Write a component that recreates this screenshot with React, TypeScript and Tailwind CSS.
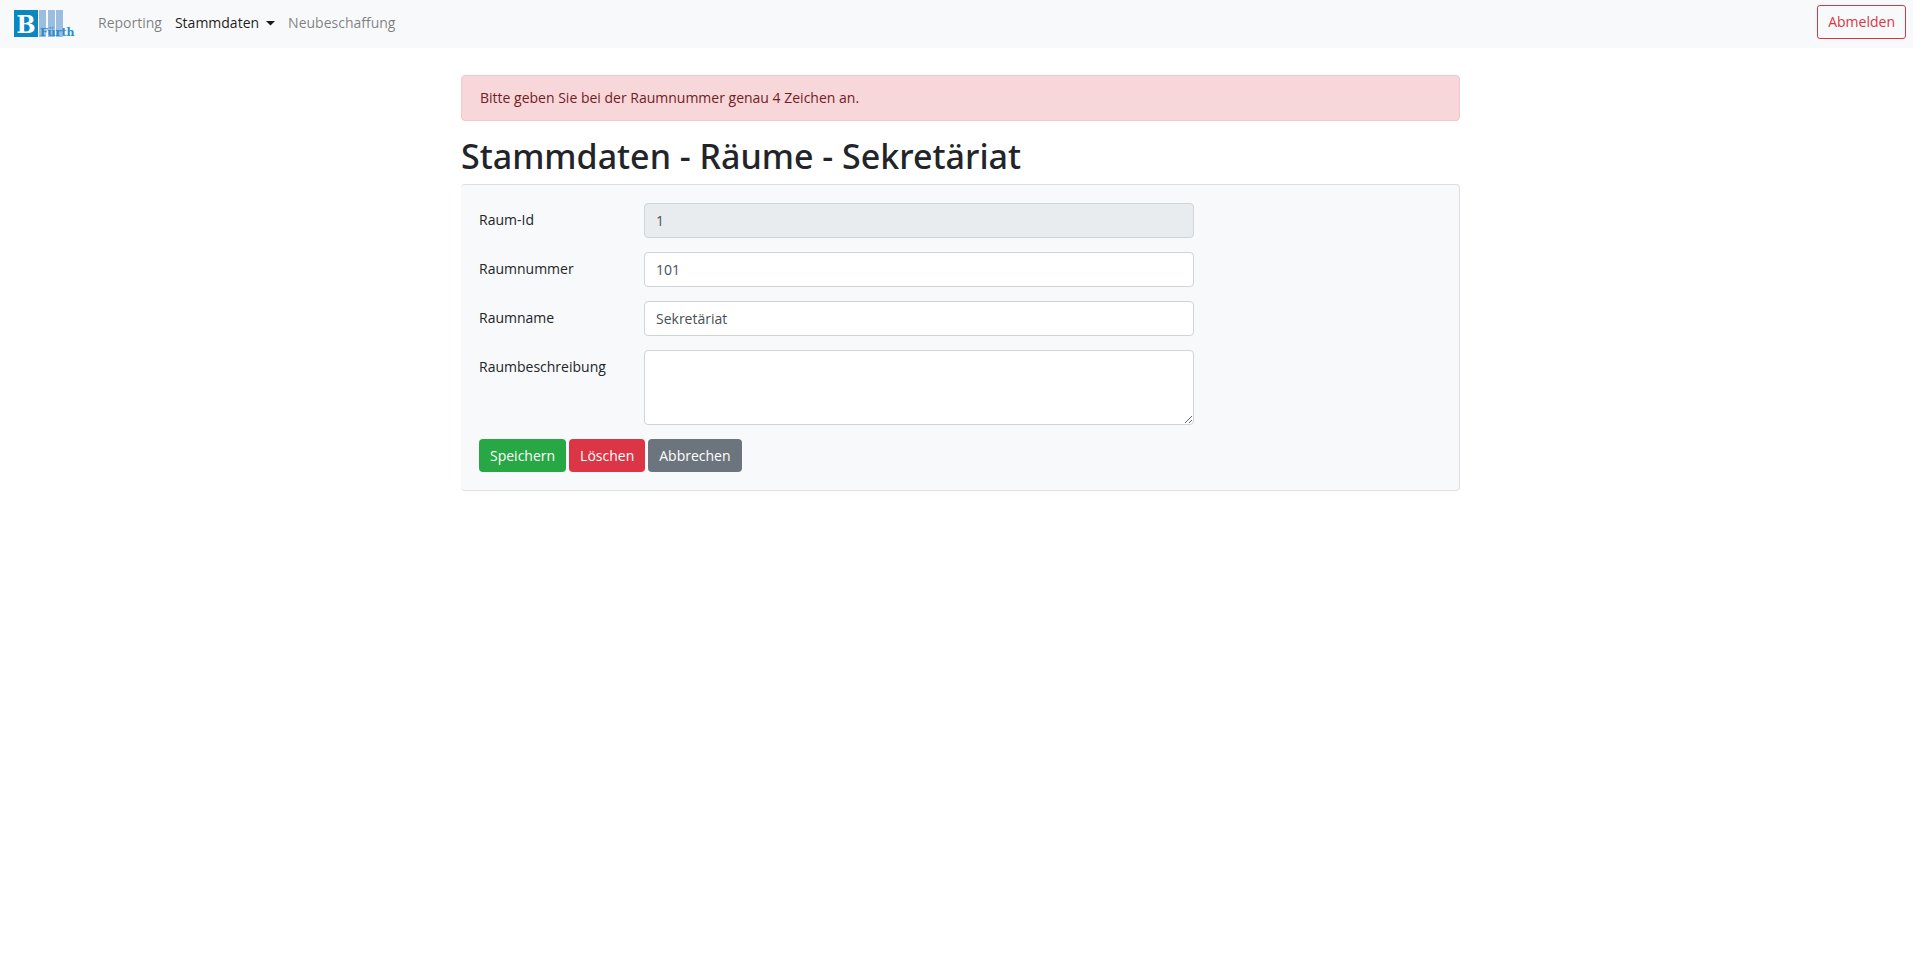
import type { ReactNode } from "react";

const control =
  "block w-full rounded border border-[#ced4da] px-[11px] text-sm text-[#495057] outline-none";

const button = "h-[33px] rounded px-[11px] text-sm text-white";

function Logo() {
  return (
    <svg width="66" height="30" viewBox="0 0 66 30" role="img" aria-label="B Fürth" className="overflow-visible">
      <rect x="0" y="3" width="24" height="27" fill="#0a86c0" />
      <rect x="25" y="3" width="7" height="27" fill="#9bbde0" />
      <rect x="34" y="3" width="7" height="27" fill="#9bbde0" />
      <rect x="42" y="3" width="7" height="27" fill="#9bbde0" />
      <text x="12" y="26" textAnchor="middle" fontFamily="'DejaVu Serif Condensed', 'DejaVu Serif', serif" fontWeight="700" fontSize="25" fill="#fff">
        B
      </text>
      <text x="26" y="29" fontFamily="'DejaVu Serif', serif" fontWeight="700" fontSize="11" fill="#2a8dc8">
        Fürth
      </text>
    </svg>
  );
}

function Field({ id, label, children }: { id: string; label: string; children: ReactNode }) {
  return (
    <div className="mb-[14px] grid grid-cols-[165px_550px] items-start">
      <label htmlFor={id} className="py-[7px] text-sm">
        {label}
      </label>
      {children}
    </div>
  );
}

export default function App() {
  return (
    <div className="min-h-screen bg-white font-['Open_Sans','Noto_Sans',sans-serif] text-sm text-[#212529]">
      <nav className="flex h-12 items-center bg-[#f8f9fa] pr-[7px] pb-1 pl-[14px]">
        <a href="#" className="mr-[18px]">
          <Logo />
        </a>
        <div className="flex flex-1 items-center gap-[13px] pt-0.5">
          <a href="#" className="text-black/50">Reporting</a>
          <a href="#" className="flex items-center gap-[7px] text-black/90">
            Stammdaten
            <svg width="9" height="5" viewBox="0 0 9 5" aria-hidden="true">
              <path d="M0 0h9L4.500 4.500z" fill="currentColor" />
            </svg>
          </a>
          <a href="#" className="text-black/50">Neubeschaffung</a>
        </div>
        <button type="button" className="h-[34px] rounded-[3px] border border-[#dc3545] px-[10px] text-sm text-[#dc3545]">
          Abmelden
        </button>
      </nav>

      <main className="mx-auto mt-[27px] w-full max-w-[1007px] pl-2">
        <div role="alert" className="rounded border border-[#f5c6cb] bg-[#f8d7da] px-[18px] py-3 text-sm text-[#721c24]">
          Bitte geben Sie bei der Raumnummer genau 4 Zeichen an.
        </div>
        <h1 className="mt-[14px] mb-[7px] font-['Noto_Sans',sans-serif] text-[34px] leading-[42px] font-medium">
          Stammdaten - Räume - Sekretäriat
        </h1>
        <form className="rounded border border-l-0 border-[#dfdfdf] bg-[#f8f9fa] p-[18px]">
          <Field id="room-id" label="Raum-Id">
            <input id="room-id" readOnly defaultValue="1" className={`${control} h-[35px] bg-[#e9ecef]`} />
          </Field>
          <Field id="room-number" label="Raumnummer">
            <input id="room-number" defaultValue="101" className={`${control} h-[35px] bg-white`} />
          </Field>
          <Field id="room-name" label="Raumname">
            <input id="room-name" defaultValue="Sekretäriat" className={`${control} h-[35px] bg-white`} />
          </Field>
          <Field id="room-description" label="Raumbeschreibung">
            <textarea id="room-description" className={`${control} h-[75px] resize bg-white py-1`} />
          </Field>
          <div className="flex gap-[3px]">
            <button type="submit" className={`${button} bg-[#28a745]`}>Speichern</button>
            <button type="button" className={`${button} bg-[#dc3545]`}>Löschen</button>
            <button type="button" className={`${button} bg-[#6c757d]`}>Abbrechen</button>
          </div>
        </form>
      </main>
    </div>
  );
}
